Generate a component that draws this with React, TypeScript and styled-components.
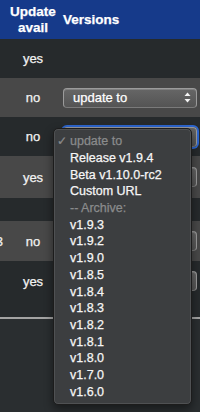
import styled, { createGlobalStyle } from "styled-components";

const GlobalStyle = createGlobalStyle`
  html, body {
    margin: 0;
    padding: 0;
    background: #2b2f31;
  }
  body {
    font-family: "Liberation Sans", Helvetica, Arial, sans-serif;
    color: #f2f2f2;
    -webkit-text-stroke: 0.25px currentColor;
  }
`;

const Screen = styled.div`
  position: relative;
  width: 200px;
  height: 412px;
  overflow: hidden;
  background: #2a2e30;
`;

const Table = styled.div`
  display: flex;
  flex-direction: column;
  border-bottom: 2px solid #a3a3a3;
  background: #262a2c;
  padding-bottom: 16px;
`;

const HeaderRow = styled.div`
  display: grid;
  grid-template-columns: 8px 50px 1fr;
  align-items: center;
  height: 39px;
  background: #163a8a;
  color: #fff;
  font-weight: 700;
  font-size: 13.5px;
`;

const HeadCell = styled.div<{ $center?: boolean }>`
  text-align: ${(p) => (p.$center ? "center" : "left")};
  line-height: 16px;
  padding-top: 1px;
  padding-left: ${(p) => (p.$center ? "0" : "5px")};
  white-space: nowrap;
`;

const Row = styled.div<{ $light?: boolean; $h?: number }>`
  display: grid;
  grid-template-columns: 8px 50px 1fr;
  align-items: center;
  height: ${(p) => p.$h ?? 39}px;
  background: ${(p) => (p.$light ? "#484848" : "#262a2c")};
  font-size: 13px;
`;

const Lead = styled.div`
  display: flex;
  justify-content: flex-end;
  overflow: hidden;
  white-space: nowrap;
  padding-right: 5px;
`;

const Avail = styled.div`
  text-align: center;
`;

const VersionCell = styled.div`
  padding-left: 5px;
  white-space: nowrap;
`;

const PopButton = styled.div<{ $focused?: boolean }>`
  display: flex;
  align-items: center;
  justify-content: space-between;
  box-sizing: border-box;
  width: 134px;
  height: 20px;
  padding: 0 5px 0 9px;
  border-radius: 4px;
  border: 1px solid #9b9b9b;
  border-bottom-color: #7a7a7a;
  background: linear-gradient(#666666, #545454);
  box-shadow: ${(p) =>
    p.$focused
      ? "0 0 0 2px #2d66cf"
      : "inset 0 1px 0 rgba(255, 255, 255, 0.18)"};
  color: #fff;
  font-size: 13px;
`;

const Arrows = () => (
  <svg width="7" height="11" viewBox="0 0 7 11">
    <path d="M3.5 0.5 L6.5 4 L0.5 4 Z" fill="#f4f4f4" />
    <path d="M3.5 10.5 L6.5 7 L0.5 7 Z" fill="#f4f4f4" />
  </svg>
);

const Menu = styled.div`
  position: absolute;
  left: 53px;
  top: 128px;
  width: 139px;
  box-sizing: border-box;
  padding: 4px 0 4px;
  background: #3c3e40;
  border: 1px solid #1c1c1c;
  border-radius: 5px;
  box-shadow: inset 0 0 0 1px rgba(255, 255, 255, 0.1),
    0 4px 10px rgba(0, 0, 0, 0.45);
`;

const Item = styled.div<{ $muted?: boolean }>`
  display: flex;
  align-items: center;
  height: 16.7px;
  font-size: 12.5px;
  color: ${(p) => (p.$muted ? "#8a8b8c" : "#f6f6f6")};
  white-space: nowrap;
`;

const Check = styled.span`
  width: 16px;
  text-align: center;
  color: #8a8b8c;
  font-family: "DejaVu Sans", sans-serif;
  font-size: 12px;
`;

const rows = [
  { avail: "yes", light: false, pop: false },
  { avail: "no", light: true, pop: true },
  { avail: "no", light: false, pop: true, focused: true },
  { avail: "yes", light: true, pop: true, h: 42 },
  { avail: "", light: false, pop: false, h: 23 },
  { avail: "no", light: true, pop: true, lead: "v1.9.3", h: 40 },
  { avail: "yes", light: false, pop: true, h: 40 },
];

const archive = [
  "v1.9.3",
  "v1.9.2",
  "v1.9.0",
  "v1.8.5",
  "v1.8.4",
  "v1.8.3",
  "v1.8.2",
  "v1.8.1",
  "v1.8.0",
  "v1.7.0",
  "v1.6.0",
];

export default function App() {
  return (
    <Screen>
      <GlobalStyle />
      <Table>
        <HeaderRow>
          <div />
          <HeadCell $center>
            Update
            <br />
            avail
          </HeadCell>
          <HeadCell>Versions</HeadCell>
        </HeaderRow>
        {rows.map((r, i) => (
          <Row key={i} $light={r.light} $h={r.h}>
            <Lead>{r.lead ?? ""}</Lead>
            <Avail>{r.avail}</Avail>
            <VersionCell>
              {r.pop && (
                <PopButton $focused={r.focused}>
                  <span>update to</span>
                  <Arrows />
                </PopButton>
              )}
            </VersionCell>
          </Row>
        ))}
      </Table>
      <Menu>
        <Item $muted>
          <Check>✓</Check>update to
        </Item>
        <Item>
          <Check />
          Release v1.9.4
        </Item>
        <Item>
          <Check />
          Beta v1.10.0-rc2
        </Item>
        <Item>
          <Check />
          Custom URL
        </Item>
        <Item $muted>
          <Check />
          -- Archive:
        </Item>
        {archive.map((v) => (
          <Item key={v}>
            <Check />
            {v}
          </Item>
        ))}
      </Menu>
    </Screen>
  );
}
